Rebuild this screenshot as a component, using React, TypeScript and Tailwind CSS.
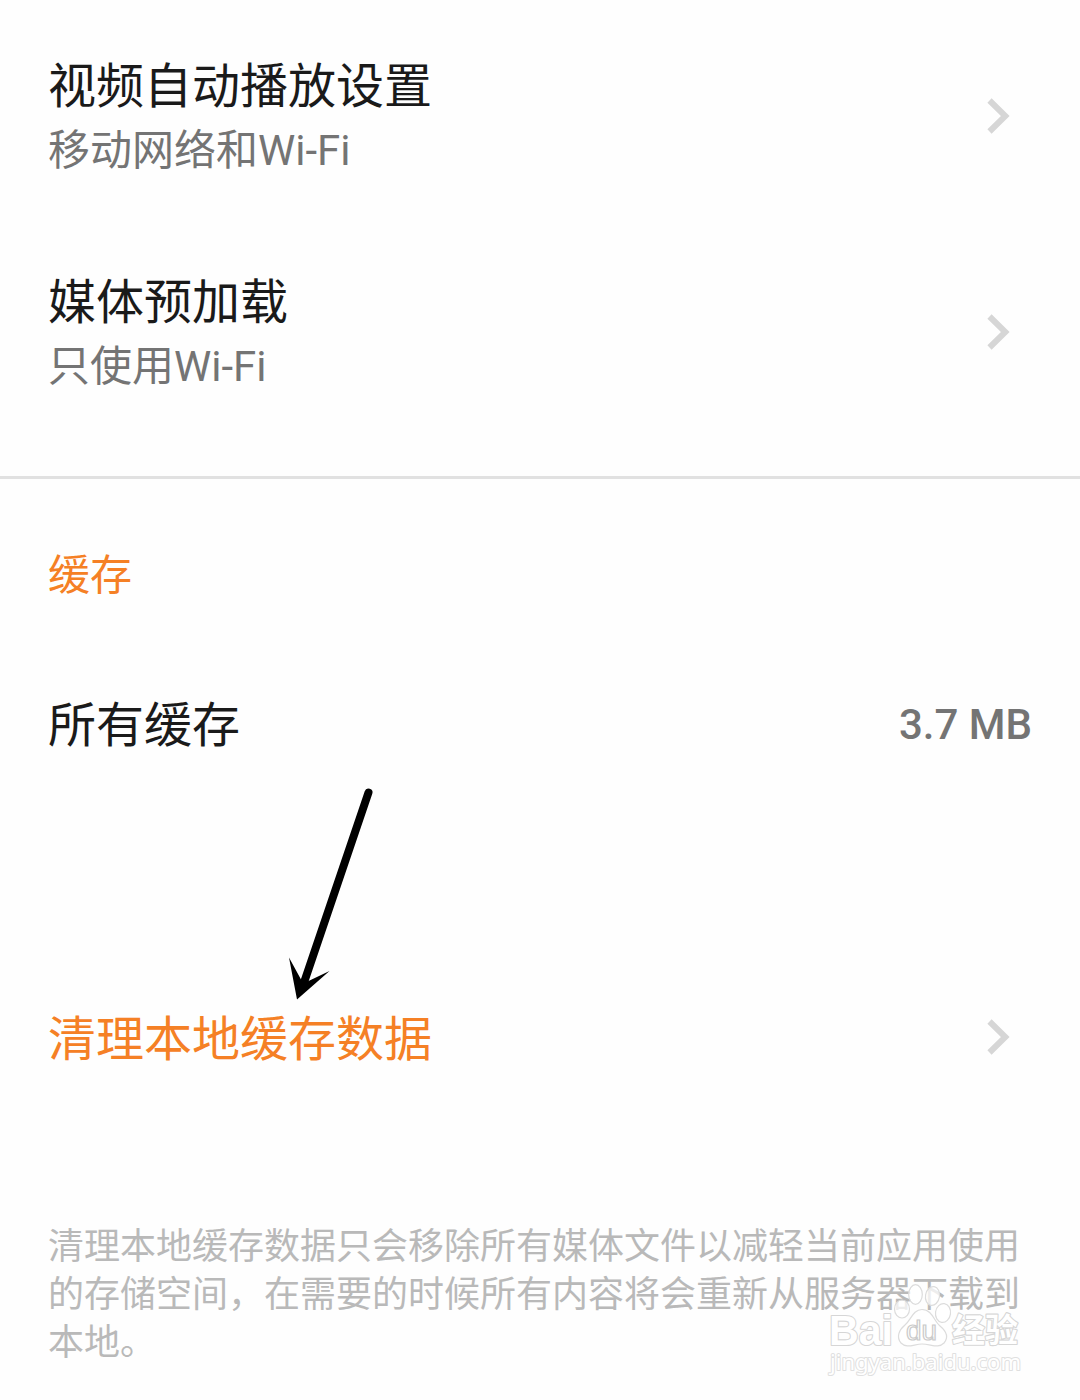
function Chevron() {
  return (
    <svg className="h-9 w-6 shrink-0" viewBox="0 0 24 36" fill="none" stroke="#d6d6d6" strokeWidth="6">
      <path d="M2.5 2.5L18.3 18L2.500 33.5" />
    </svg>
  );
}

function SettingRow({ title, value }: { title: string; value: string }) {
  return (
    <div className="flex h-[216px] items-center justify-between pl-12 pr-[69px]">
      <div>
        <div className="text-[48px] leading-[70px] text-[#1a1a1a]">{title}</div>
        <div className="text-[42px] leading-[58px] text-[#747474]">{value}</div>
      </div>
      <Chevron />
    </div>
  );
}

function Arrow() {
  return (
    <svg className="absolute left-[280px] top-[780px] h-[230px] w-[100px]" viewBox="280 780 100 230">
      <path d="M368.5 792.5L303.5 984" stroke="#000" strokeWidth="8" strokeLinecap="round" />
      <path d="M297 999.5L289 957.5L301 979.5L307.5 981.5L329.5 971Z" fill="#000" />
    </svg>
  );
}

function Watermark() {
  return (
    <svg
      className="absolute left-[820px] top-[1280px] h-[105px] w-[210px]"
      viewBox="820 1280 210 105"
      fill="#fff"
      stroke="#dcdcdc"
      strokeWidth="1.2"
    >
      <g fillOpacity="0.75">
        <ellipse cx="902" cy="1309" rx="7.5" ry="9" />
        <ellipse cx="915.5" cy="1294.5" rx="6.8" ry="9.8" />
        <ellipse cx="932.5" cy="1296" rx="7" ry="9.5" transform="rotate(10 932.5 1296)" />
        <ellipse cx="943" cy="1313" rx="7.5" ry="9.5" transform="rotate(8 943 1313)" />
      </g>
      <path d="M922 1309.5C932 1309.5 934 1321 940 1326C946 1331 949 1337 944 1343C938 1349 931 1344 922 1344C914 1344 907 1349 901 1343C896 1337 899 1330 905 1325C911 1320 913 1309.5 922 1309.5Z" />
      <text x="906" y="1340" fontSize="27" fontFamily='"Liberation Sans", sans-serif' textLength="31" lengthAdjust="spacingAndGlyphs" stroke="#cacaca">du</text>
      <g stroke="#d6d6d6" strokeLinejoin="round" paintOrder="stroke">
        <text x="829" y="1345" fontSize="43" fontFamily='"Liberation Sans", sans-serif' fontWeight="700" textLength="64" lengthAdjust="spacingAndGlyphs" strokeWidth="2.2">Bai</text>
        <text x="952" y="1342" fontSize="33" fontFamily='"Noto Sans CJK SC", sans-serif' fontWeight="700" strokeWidth="2.2">经验</text>
        <text x="830" y="1370" fontSize="22" fontFamily='"Noto Sans", sans-serif' textLength="191" stroke="#e0e0e0" strokeWidth="2">jingyan.baidu.com</text>
      </g>
    </svg>
  );
}

export default function App() {
  return (
    <main className="relative h-[1400px] w-[1080px] overflow-hidden bg-[#fefefe] pt-2 font-[Roboto,'Noto_Sans_CJK_SC',sans-serif]">
      <SettingRow title="视频自动播放设置" value="移动网络和Wi-Fi" />
      <SettingRow title="媒体预加载" value="只使用Wi-Fi" />
      <div className="mt-9 h-[3px] bg-[#e1e1e1]" />
      <h2 className="mt-[65px] pl-12 text-[42px] leading-[64px] text-[#f58025]">缓存</h2>
      <div className="mt-[82px] flex h-[72px] items-center justify-between px-12">
        <span className="text-[48px] leading-[72px] text-[#1a1a1a]">所有缓存</span>
        <span className="pb-0.5 text-[42px] font-medium leading-[72px] text-[#747474]">3.7 MB</span>
      </div>
      <div className="mt-[239px] flex h-[72px] items-center justify-between pl-12 pr-[69px]">
        <span className="pt-1.5 text-[48px] leading-[72px] text-[#f58025]">清理本地缓存数据</span>
        <Chevron />
      </div>
      <p className="mt-[150px] w-[1040px] pl-12 text-[36px] leading-[48px] text-[#b9b9b9]">
        清理本地缓存数据只会移除所有媒体文件以减轻当前应用使用
        <br />
        的存储空间，在需要的时候所有内容将会重新从服务器下载到
        <br />
        本地。
      </p>
      <Arrow />
      <Watermark />
    </main>
  );
}
